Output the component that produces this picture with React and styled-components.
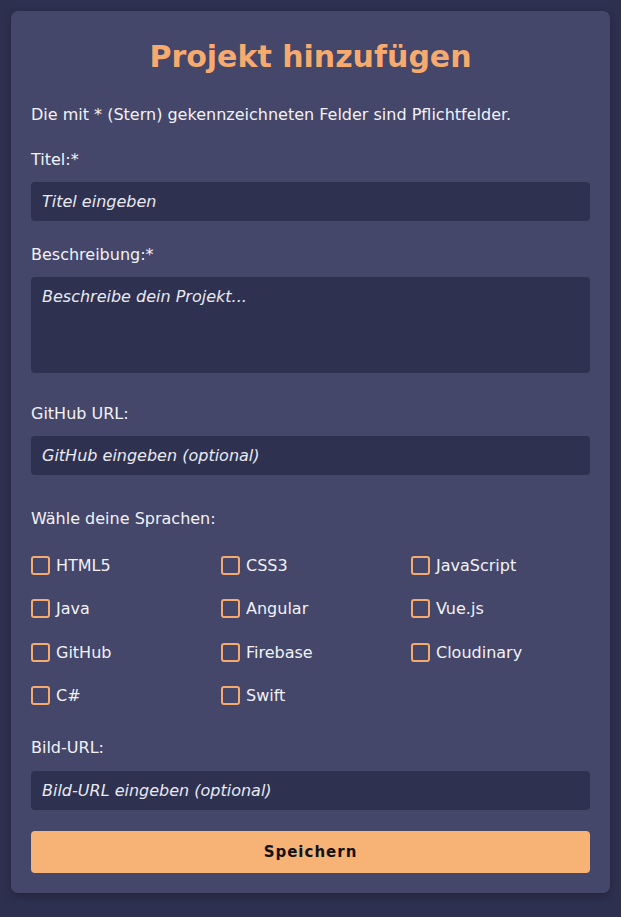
import React from 'react'
import styled, { createGlobalStyle } from 'styled-components'

const FONT = '"DejaVu Sans", "Noto Sans", sans-serif'

const GlobalStyle = createGlobalStyle`
    * { box-sizing: border-box; }
    body {
        margin: 0;
        background: #2e3050;
        font-family: ${FONT};
        color: #f2f2f6;
    }
`

const languages = [
    'HTML5', 'CSS3', 'JavaScript',
    'Java', 'Angular', 'Vue.js',
    'GitHub', 'Firebase', 'Cloudinary',
    'C#', 'Swift',
]

function App() {
    return (
        <>
            <GlobalStyle />
            <Page>
                <Card>
                    <Title>Projekt hinzufügen</Title>
                    <Intro>Die mit * (Stern) gekennzeichneten Felder sind Pflichtfelder.</Intro>

                    <Field>
                        <Label>Titel:*</Label>
                        <Input placeholder="Titel eingeben" />
                    </Field>

                    <Field gap={31}>
                        <Label>Beschreibung:*</Label>
                        <TextArea placeholder="Beschreibe dein Projekt..." />
                    </Field>

                    <Field gap={34}>
                        <Label>GitHub URL:</Label>
                        <Input placeholder="GitHub eingeben (optional)" />
                    </Field>

                    <Label>Wähle deine Sprachen:</Label>
                    <LangGrid>
                        {languages.map((lang) => (
                            <Check key={lang}>
                                <Box type="checkbox" />
                                {lang}
                            </Check>
                        ))}
                    </LangGrid>

                    <Field gap={21}>
                        <Label space={13}>Bild-URL:</Label>
                        <Input placeholder="Bild-URL eingeben (optional)" />
                    </Field>

                    <Button>Speichern</Button>
                </Card>
            </Page>
        </>
    )
}

export default App

const Page = styled.div`
    padding: 11px 11px 24px;
`
const Card = styled.div`
    background: #44466a;
    border-radius: 7px;
    padding: 20px;
    display: flex;
    flex-direction: column;
    box-shadow: 0 3px 8px rgba(0, 0, 0, .25);
`
const Title = styled.h1`
    margin: 8px 0 30px;
    text-align: center;
    color: #f6aa6d;
    font-size: 30px;
    line-height: 36px;
    font-weight: 700;
`
const Intro = styled.p`
    margin: 0 0 25px;
    font-size: 16px;
    line-height: 20px;
`
const Field = styled.div`
    display: flex;
    flex-direction: column;
    margin-bottom: ${(p) => p.gap || 24}px;
`
const Label = styled.label`
    display: block;
    font-size: 16px;
    line-height: 20px;
    margin-bottom: ${(p) => p.space || 12}px;
`
const inputStyle = `
    width: 100%;
    border: none;
    outline: none;
    border-radius: 4px;
    background: #2e3150;
    color: #f2f2f6;
    font-family: ${FONT};
    font-size: 16px;
    font-style: italic;
    padding: 0 11px;
    &::placeholder {
        color: #e9e9f0;
        opacity: 1;
    }
`
const Input = styled.input`
    ${inputStyle}
    height: 39px;
`
const TextArea = styled.textarea`
    ${inputStyle}
    display: block;
    height: 96px;
    padding-top: 10px;
    resize: none;
`
const LangGrid = styled.div`
    display: grid;
    grid-template-columns: repeat(3, 190px);
    row-gap: 21.5px;
    margin: 13px 0 31.5px;
`
const Check = styled.label`
    display: flex;
    align-items: center;
    gap: 6px;
    height: 22px;
    font-size: 16px;
`
const Box = styled.input`
    appearance: none;
    margin: 0;
    width: 19px;
    height: 19px;
    border: 2px solid #f6aa6d;
    border-radius: 3px;
    background: transparent;
`
const Button = styled.button`
    height: 42px;
    border: none;
    border-radius: 4px;
    background: #f7b275;
    color: #111;
    font-family: ${FONT};
    font-size: 15px;
    font-weight: 700;
    letter-spacing: 1px;
`
